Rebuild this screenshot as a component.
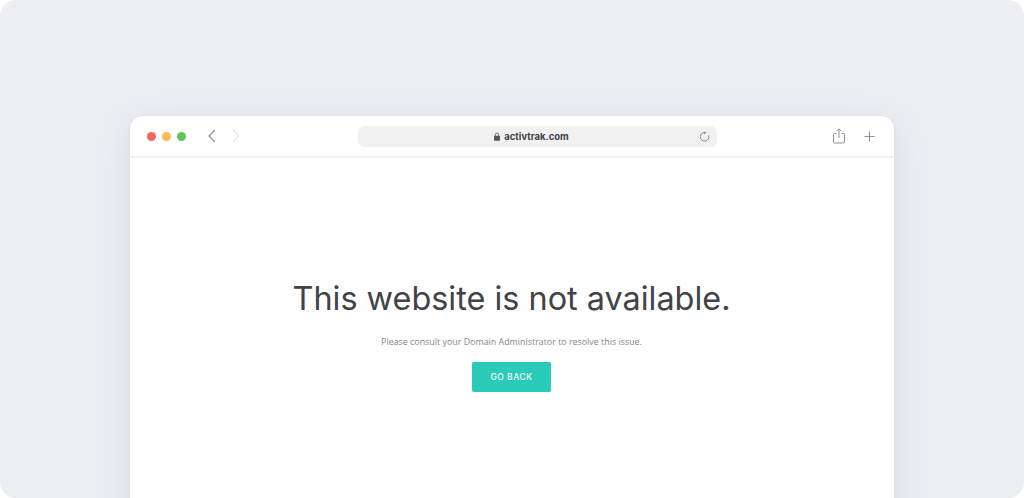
<style>
:global(body) { margin: 0; background: #fff; }
.page {
  height: 498px; box-sizing: border-box; overflow: hidden;
  background: #eceef2; border-radius: 16px;
  padding: 116px 130px 0;
}
.win {
  height: 420px; background: #fff; border-radius: 13px 13px 0 0;
  box-shadow: 0 8px 36px rgba(120, 125, 140, .14), 0 1px 3px rgba(120,125,140,.14);
  font-family: Inter, sans-serif;
}
.bar {
  height: 40px; display: flex; align-items: center;
  padding: 0 19px 0 17px;
  border-bottom: 2px solid #f0f0f2;
}
.dots { display: flex; gap: 6px; width: 43px; margin-right: 17px; }
.dots i { width: 9px; height: 9px; border-radius: 50%; }
.r { background: #ee6a5f; } .y { background: #f6bd50; } .g { background: #61c454; }
.nav { display: flex; gap: 14px; width: 34px; margin-right: 117px; }
.nav svg { display: block; }
.url {
  width: 359px; height: 21px; margin-top: 1px; background: #f1f1f2; border-radius: 7px;
  display: flex; align-items: center; justify-content: center; gap: 4px;
  position: relative; padding-right: 12px; box-sizing: border-box;
  font-size: 9.5px; font-weight: 700; color: #3f4247; 
}
.reload { position: absolute; right: 7px; top: 5px; }
.actions { margin-left: auto; display: flex; align-items: center; gap: 19px; }
.body { display: flex; flex-direction: column; align-items: center; padding: 119px 1px 0 0; }
h1 {
  margin: 0; font-size: 32.4px; line-height: 44px; font-weight: 400; color: #414347;
  white-space: nowrap;
}
p { margin: 14px 0 0; font-size: 8.9px; line-height: 14px; color: #85878b; font-family: "Open Sans", sans-serif; }
.btn {
  margin-top: 13px; width: 79px; height: 30px; border: 0; padding: 0;
  background: #2accb9; border-radius: 2px; color: #f2fbfa;
  font-family: Inter, sans-serif; font-size: 8.5px; font-weight: 500; letter-spacing: .5px;
  box-shadow: 0 0 1px rgba(0,0,0,.15);
}
</style>

<div class="page">
  <div class="win">
    <div class="bar">
      <div class="dots"><i class="r"></i><i class="y"></i><i class="g"></i></div>
      <div class="nav">
        <svg width="10" height="16" viewBox="0 0 10 16"><path d="M8 2 2 8l6 6" fill="none" stroke="#8e9094" stroke-width="1.200"/></svg>
        <svg width="10" height="16" viewBox="0 0 10 16"><path d="M2 2 8 8l-6 6" fill="none" stroke="#e2e3e5" stroke-width="1.200"/></svg>
      </div>
      <div class="url">
        <svg width="6" height="9" viewBox="0 0 7 10"><rect x="0" y="4" width="7" height="6" rx="1" fill="#55585c"/><path d="M1.500 4.500V3a2 2 0 0 1 4 0v1.500" fill="none" stroke="#55585c" stroke-width="1"/></svg>
        <span>activtrak.com</span>
        <svg class="reload" width="11" height="11" viewBox="0 0 11 11"><path d="M6.600 1.600A4.300 4.300 0 1 0 9.700 4.400" fill="none" stroke="#85878b" stroke-width="1"/><path d="M4.800.2 7.300 1.700 5 3.300z" fill="#85878b"/></svg>
      </div>
      <div class="actions">
        <svg width="12" height="16" viewBox="0 0 12 16"><path d="M3.500 5.500H1.500a1 1 0 0 0-1 1V14a1 1 0 0 0 1 1h9a1 1 0 0 0 1-1V6.500a1 1 0 0 0-1-1h-2" fill="none" stroke="#8e9094"/><path d="M6 10V1M3.500 3.300 6 .9l2.500 2.400" fill="none" stroke="#8e9094"/></svg>
        <svg width="11" height="11" viewBox="0 0 11 11"><path d="M5.500.5v10M.5 5.500h10" fill="none" stroke="#8e9094" stroke-width="1.100"/></svg>
      </div>
    </div>
    <div class="body">
      <h1>This website is not available.</h1>
      <p>Please consult your Domain Administrator to resolve this issue.</p>
      <button class="btn">GO BACK</button>
    </div>
  </div>
</div>
